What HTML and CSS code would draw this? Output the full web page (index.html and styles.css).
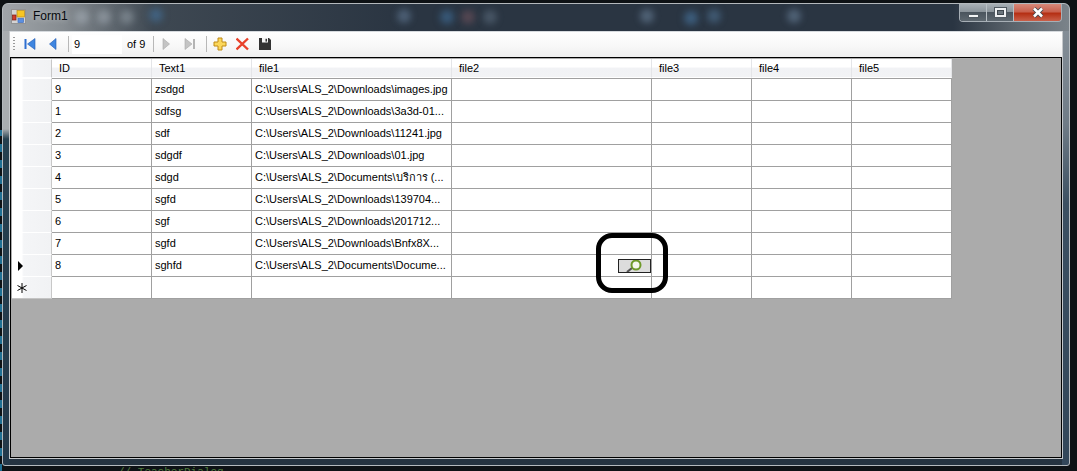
FILE: index.html
```html
<!DOCTYPE html>
<html lang="en">
<head>
  <meta charset="UTF-8" />
  <title>Form1</title>
  <link rel="stylesheet" href="styles.css">
</head>
<body>

  <div class="window">
    <div class="titlebar">
      <div class="glass-blobs"></div>
      <svg class="app-icon" width="15" height="15" viewBox="0 0 15 15">
        <rect x="0.5" y="0.5" width="14" height="14" fill="#d4d4d4" stroke="#929292"/>
        <rect x="6" y="1.500" width="7.500" height="6.500" fill="#f7c623" stroke="#b58a1c" stroke-width="0.7"/>
        <rect x="1.500" y="6" width="3.500" height="5" fill="#d03a2a" stroke="#7c1d14" stroke-width="0.7"/>
        <rect x="7" y="9.500" width="5.500" height="4" fill="#5b8fe0" stroke="#3f6fc0" stroke-width="0.7"/>
      </svg>
      <span class="title">Form1</span>
      <div class="caption-btns">
        <div class="cap-btn cap-min"><span class="min-glyph"></span></div>
        <div class="cap-btn cap-max"><span class="max-glyph"></span></div>
        <div class="cap-btn cap-close">
          <svg width="14" height="11" viewBox="0 0 14 11">
            <path d="M3 1.500 L11 9.500 M11 1.500 L3 9.500" stroke="#3d4650" stroke-width="4.200"/>
            <path d="M3 1.500 L11 9.500 M11 1.500 L3 9.500" stroke="#fff" stroke-width="2.600"/>
          </svg>
        </div>
      </div>
    </div>

    <div class="frame">
      <div class="toolbar">
        <span class="grip"></span>
        <svg class="tool" width="16" height="16" viewBox="0 0 16 16"><rect x="2.500" y="3" width="2" height="10" fill="#2f6fd0"/><path d="M13 2.500 V13.500 L5.500 8 Z" fill="#3f86e0" stroke="#1f57b0" stroke-width="0.6"/></svg>
        <svg class="tool" width="16" height="16" viewBox="0 0 16 16"><path d="M11 2.500 V13.500 L4.500 8 Z" fill="#3f86e0" stroke="#1f57b0" stroke-width="0.6"/></svg>
        <span class="sep sep-first"></span>
        <div class="pos-box">9</div>
        <span class="of-label">of 9</span>
        <span class="sep"></span>
        <svg class="tool" width="16" height="16" viewBox="0 0 16 16"><path d="M3 2.500 V13.500 L9.500 8 Z" fill="#c4c4c4" stroke="#a8a8a8" stroke-width="0.6"/></svg>
        <svg class="tool" width="16" height="16" viewBox="0 0 16 16"><path d="M2 2.500 V13.500 L9 8 Z" fill="#c4c4c4" stroke="#a8a8a8" stroke-width="0.6"/><rect x="10" y="3" width="2" height="10" fill="#b4b4b4"/></svg>
        <span class="sep"></span>
        <svg class="tool" width="16" height="16" viewBox="0 0 16 16"><path d="M5 2 H9 V6 H13 V10 H9 V14 H5 V10 H1 V6 H5 Z" fill="#fbd75b" stroke="#c08a14" stroke-width="1"/></svg>
        <svg class="tool" width="16" height="16" viewBox="0 0 16 16"><path d="M0.500 2.500 L12 13.500 M12 2.500 L0.500 13.500" stroke="#e8412a" stroke-width="2.400"/></svg>
        <svg class="tool" width="16" height="16" viewBox="0 0 16 16"><path d="M0 2 H10 L12 4 V14 H0 Z" fill="#333"/><rect x="3" y="2" width="6" height="4.500" fill="#f4f4f4"/><rect x="6.500" y="2.800" width="1.500" height="2.800" fill="#333"/></svg>
      </div>

      <div class="client">
        <table class="grid">
          <colgroup>
            <col class="c-head"><col class="c-100"><col class="c-100"><col class="c-200"><col class="c-200"><col class="c-100"><col class="c-100"><col class="c-100">
          </colgroup>
          <thead>
            <tr>
              <th class="row-head"></th>
              <th>ID</th><th>Text1</th><th>file1</th><th>file2</th><th>file3</th><th>file4</th><th>file5</th>
            </tr>
          </thead>
          <tbody>
            <tr><td class="row-head"></td><td>9</td><td>zsdgd</td><td>C:\Users\ALS_2\Downloads\images.jpg</td><td></td><td></td><td></td><td></td></tr>
            <tr><td class="row-head"></td><td>1</td><td>sdfsg</td><td>C:\Users\ALS_2\Downloads\3a3d-01...</td><td></td><td></td><td></td><td></td></tr>
            <tr><td class="row-head"></td><td>2</td><td>sdf</td><td>C:\Users\ALS_2\Downloads\11241.jpg</td><td></td><td></td><td></td><td></td></tr>
            <tr><td class="row-head"></td><td>3</td><td>sdgdf</td><td>C:\Users\ALS_2\Downloads\01.jpg</td><td></td><td></td><td></td><td></td></tr>
            <tr><td class="row-head"></td><td>4</td><td>sdgd</td><td>C:\Users\ALS_2\Documents\บริการ (...</td><td></td><td></td><td></td><td></td></tr>
            <tr><td class="row-head"></td><td>5</td><td>sgfd</td><td>C:\Users\ALS_2\Downloads\139704...</td><td></td><td></td><td></td><td></td></tr>
            <tr><td class="row-head"></td><td>6</td><td>sgf</td><td>C:\Users\ALS_2\Downloads\201712...</td><td></td><td></td><td></td><td></td></tr>
            <tr><td class="row-head"></td><td>7</td><td>sgfd</td><td>C:\Users\ALS_2\Downloads\Bnfx8X...</td><td></td><td></td><td></td><td></td></tr>
            <tr><td class="row-head"><span class="arrow"></span></td><td>8</td><td>sghfd</td><td>C:\Users\ALS_2\Documents\Docume...</td><td></td><td></td><td></td><td></td></tr>
            <tr class="new-row">
              <td class="row-head">
                <svg class="star" width="10" height="10" viewBox="0 0 10 10"><path d="M5 0 V10 M0.500 2.500 L9.500 7.500 M9.500 2.500 L0.500 7.500" stroke="#000" stroke-width="1"/></svg>
              </td>
              <td></td><td></td><td></td><td></td><td></td><td></td><td></td>
            </tr>
          </tbody>
        </table>

        <div class="annot-ring"></div>
        <div class="mag-btn">
          <svg width="31" height="12" viewBox="0 0 31 12">
            <path d="M8 12 L13 8" stroke="#555" stroke-width="2.200"/>
            <circle cx="17" cy="5" r="4.500" fill="#f4f7ee" stroke="#6f9a2a" stroke-width="2"/>
          </svg>
        </div>
      </div>
    </div>
  </div>

  <div class="behind-code">// TeacherDialog</div>

</body>
</html>
```

FILE: styles.css
```css
* {
  box-sizing: border-box;
  margin: 0;
  padding: 0;
  font-family: "Liberation Sans", Arial, sans-serif;
}

html, body {
  height: 471px;
  overflow: hidden;
}

body {
  width: 1077px;
  background:
    linear-gradient(180deg, #0e1215 130px, transparent 130px) left top / 2px 471px no-repeat,
    repeating-linear-gradient(180deg, #1f6f93 0, #1f6f93 8px, #0e1215 8px, #0e1215 16px) left top / 2px 471px no-repeat,
    #0e1215;
}

.window {
  width: 1068px;
  height: 463px;
  margin: 3px 0 0 2px;
  padding: 0 6px 6px 6px;
  background:
    linear-gradient(90deg, #a0a5a9 0, #868c91 60px, #3e4852 150px, #2a3542 400px, #2a3542 950px, #5b646c 1010px, #7b838a 100%) left top / 100% 27px no-repeat,
    linear-gradient(180deg, #a9adb0 0, #a9adb0 125px, #26404f 135px, #24394a 100%) left top / 7px 100% no-repeat,
    linear-gradient(180deg, #8a939b 0, #6f7b86 120px, #3c5062 200px, #33475a 100%) right top / 7px 100% no-repeat,
    #253340;
  border: 1px solid #b4b9bd;
  border-radius: 6px 6px 3px 3px;
  display: flex;
  flex-direction: column;
}

.titlebar {
  height: 27px;
  flex: none;
  display: flex;
  align-items: center;
  gap: 7px;
  padding: 0 0 3px 2px;
  position: relative;
}

/* blurred stuff showing through the aero glass */
.glass-blobs {
  position: absolute;
  left: 0;
  top: 6px;
  width: 14px;
  height: 14px;
  border-radius: 50%;
  box-shadow:
    66px 0 7px 0 rgba(190, 200, 210, 0.4),
    88px 0 7px 0 rgba(190, 200, 210, 0.4),
    111px 0 7px 0 rgba(190, 200, 210, 0.35),
    140px -2px 7px 0 rgba(70, 125, 175, 0.5),
    388px -1px 7px 0 rgba(130, 160, 195, 0.4),
    431px 0 7px 0 rgba(70, 125, 175, 0.5),
    452px 0 7px 0 rgba(130, 90, 100, 0.5),
    474px 0 7px 0 rgba(130, 150, 170, 0.35),
    631px -1px 7px 0 rgba(140, 170, 200, 0.4),
    675px 1px 7px 0 rgba(80, 135, 185, 0.5),
    698px -1px 7px 0 rgba(90, 135, 175, 0.45),
    778px -1px 7px 0 rgba(140, 170, 200, 0.4);
}

.app-icon {
  flex: none;
  position: relative;
}

.title {
  position: relative;
  font-size: 12px;
  color: #05080c;
  text-shadow: 0 0 6px rgba(255, 255, 255, 0.6);
}

.caption-btns {
  margin-left: auto;
  margin-right: 1px;
  align-self: flex-start;
  display: flex;
  height: 18px;
  border: 1px solid #a7afb6;
  border-top: none;
  border-radius: 0 0 4px 4px;
  overflow: hidden;
}

.cap-btn {
  height: 100%;
  display: flex;
  align-items: center;
  justify-content: center;
}

.cap-min, .cap-max {
  width: 27px;
  border-right: 1px solid #b9c0c6;
  background: linear-gradient(180deg, #a8b0b6 0%, #8b949b 45%, #4b555e 50%, #5e6870 100%);
}

.cap-close {
  width: 47px;
  background: linear-gradient(180deg, #d9897a 0%, #c9614e 45%, #b52f14 55%, #c9604a 100%);
}

.min-glyph {
  display: block;
  width: 11px;
  height: 4px;
  margin-top: 6px;
  background-color: #f2f4f5;
  border: 1px solid #515a62;
}

.max-glyph {
  display: block;
  width: 11px;
  height: 9px;
  background-color: #6b757d;
  border: 2px solid #eef0f2;
  outline: 1px solid #515a62;
  box-shadow: inset 0 0 0 1px #3f474e;
  margin-top: -1px;
}

.frame {
  flex: 1;
  display: flex;
  flex-direction: column;
  min-height: 0;
  border: 1px solid #c5c8cb;
  border-top: none;
}

.toolbar {
  height: 26px;
  flex: none;
  display: flex;
  align-items: center;
  padding: 0 0 1px 3px;
  background: linear-gradient(180deg, #ffffff 0%, #f7f7f7 60%, #efefef 100%);
  border-top: 1px solid #d6dade;
}

.grip {
  width: 2px;
  height: 14px;
  margin-right: 3px;
  background-image: linear-gradient(180deg, #9a9a9a 50%, transparent 50%);
  background-size: 2px 3px;
}

.tool {
  flex: none;
  margin: 0 3.5px;
}

.sep {
  width: 1px;
  height: 16px;
  background-color: #b8b8b8;
  margin: 0 3px;
}

.sep-first {
  margin-left: 4px;
}

.pos-box {
  width: 50px;
  height: 19px;
  background-color: #fff;
  font-size: 11px;
  line-height: 19px;
  padding-left: 2px;
  color: #000;
}

.of-label {
  font-size: 11px;
  color: #000;
  margin: 0 4.500px 0 5px;
}

.client {
  flex: 1;
  position: relative;
  min-height: 0;
  background-color: #ababab;
  border: 1px solid #000;
  padding: 1px 0 0 1px;
}

.grid {
  table-layout: fixed;
  border-collapse: separate;
  border-spacing: 0;
  width: 940px;
  font-size: 11px;
  color: #000;
}

.c-head { width: 40px; }
.c-100 { width: 100px; }
.c-200 { width: 200px; }

.grid th {
  height: 19px;
  font-weight: normal;
  text-align: left;
  padding-left: 7px;
  background: linear-gradient(180deg, #ffffff 0%, #ffffff 45%, #f1f2f5 50%, #f2f3f5 100%);
  border-right: 1px solid #e4e5e8;
  border-bottom: 1px solid #ffffff;
}

.grid td {
  height: 22px;
  background-color: #fff;
  padding: 0 3px 2px;
  white-space: nowrap;
  overflow: hidden;
  border-right: 1px solid #a0a0a0;
  border-top: 1px solid #a0a0a0;
}

.grid .new-row td {
  height: 23px;
  border-bottom: 1px solid #a0a0a0;
}

.grid .row-head {
  background: linear-gradient(90deg, #ffffff 0%, #ffffff 25%, #f4f5f7 30%, #f1f2f4 100%);
  border-top: 1px solid #ffffff;
  border-right: 1px solid #c8c8c8;
  padding: 0 0 0 6px;
}

.grid .new-row .row-head {
  border-bottom-color: #c4c4c4;
}

.arrow {
  display: block;
  width: 0;
  height: 0;
  border-left: 5px solid #000;
  border-top: 5px solid transparent;
  border-bottom: 5px solid transparent;
}

.star {
  display: block;
  margin-left: -1px;
}

.annot-ring {
  position: absolute;
  left: 585px;
  top: 175px;
  width: 72px;
  height: 60px;
  border: 5px solid #000;
  border-radius: 16px;
}

.mag-btn {
  position: absolute;
  left: 607px;
  top: 201px;
  width: 33px;
  height: 14px;
  background-color: #dcdcdc;
  border: 1px solid #222;
  overflow: hidden;
}

.mag-btn svg {
  display: block;
}

.behind-code {
  font-family: "Liberation Mono", monospace;
  font-size: 11px;
  color: #4e7a3e;
  margin: 0 0 0 118px;
  white-space: nowrap;
}
```
